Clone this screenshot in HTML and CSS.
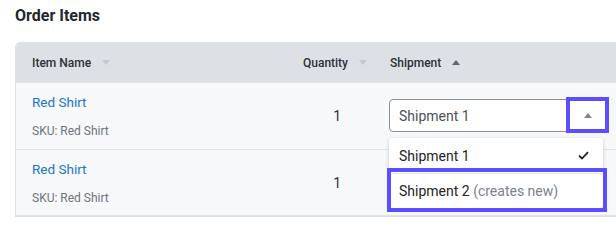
FILE: index.html
```html
<!DOCTYPE html>
<html>
<head>
<meta charset="utf-8">
<link rel="stylesheet" href="styles.css">
</head>
<body>
<div class="page">
  <h2 class="title">Order Items</h2>
  <div class="table">
    <div class="row head">
      <div class="cell c1"><span>Item Name</span><span class="caret down light"></span></div>
      <div class="cell c2"><span>Quantity</span><span class="caret down light"></span></div>
      <div class="cell c3"><span>Shipment</span><span class="caret up dark"></span></div>
    </div>
    <div class="row body-row">
      <div class="cell c1 item">
        <a class="link">Red Shirt</a>
        <span class="sku">SKU: Red Shirt</span>
      </div>
      <div class="cell c2 qty">1</div>
      <div class="cell c3 ship">
        <div class="select">
          <span class="select-value">Shipment 1</span>
          <div class="select-btn"><span class="caret up mid"></span></div>
        </div>
        <div class="menu">
          <div class="option">
            <span>Shipment 1</span>
            <svg class="check" width="11" height="9" viewBox="0 0 11 9"><path d="M1 4.6 L4 7.5 L10 1.2" fill="none" stroke="#1c2026" stroke-width="1.8"/></svg>
          </div>
          <div class="option second">
            <span>Shipment 2 <span class="muted">(creates new)</span></span>
            <div class="hl"></div>
          </div>
        </div>
      </div>
    </div>
    <div class="row body-row last">
      <div class="cell c1 item">
        <a class="link">Red Shirt</a>
        <span class="sku">SKU: Red Shirt</span>
      </div>
      <div class="cell c2 qty">1</div>
      <div class="cell c3"></div>
    </div>
  </div>
</div>
</body>
</html>
```
FILE: styles.css
```css
html, body {
  margin: 0;
  padding: 0;
  overflow: hidden;
  background: #ffffff;
}
body {
  font-family: Roboto, "Liberation Sans", sans-serif;
  color: #2b3138;
}
.page {
  padding: 6px 0 0 15px;
}
.title {
  margin: 0 0 16px 0;
  font-size: 16px;
  line-height: 20px;
  font-weight: 700;
  color: #22272d;
}
.table {
  width: 600px;
  border: 1px solid #dde1e5;
  border-right: none;
  border-top: none;
  border-radius: 5px 0 0 0;
  background: #f7f8fa;
}
.row {
  display: grid;
  grid-template-columns: 269px 104px 1fr;
}
.head {
  background: #dde1e5;
  height: 41px;
  border-radius: 5px 0 0 0;
  font-size: 12px;
  font-weight: 500;
  color: #2b3138;
}
.head .cell {
  display: flex;
  align-items: center;
}
.head .c1 { padding-left: 16px; gap: 11px; }
.head .c2 { justify-content: flex-end; padding-right: 22px; gap: 11px; }
.head .c3 { padding-left: 1px; gap: 11px; }
.caret {
  width: 0;
  height: 0;
  border-left: 4.5px solid transparent;
  border-right: 4.5px solid transparent;
}
.caret.down { border-top: 5px solid #c3c8ce; }
.caret.up { border-bottom: 5px solid #5e6670; }
.caret.up.mid { border-bottom-color: #7e8791; }
.body-row {
  height: 66px;
  border-bottom: 1px solid #dfe3e7;
}
.body-row.last { height: 65px; }
.item {
  padding: 10px 0 0 16px;
  display: flex;
  flex-direction: column;
  gap: 12px;
}
.link {
  font-size: 13.5px;
  line-height: 18px;
  color: #1b76c6;
}
.sku {
  font-size: 12px;
  line-height: 16px;
  color: #6d747c;
}
.qty {
  display: flex;
  align-items: center;
  justify-content: flex-end;
  padding-right: 48px;
  font-size: 14px;
  color: #2b3138;
}
.ship {
  position: relative;
  padding-top: 16px;
}
.select {
  position: relative;
  width: 212px;
  height: 31px;
  border: 1px solid #8b929a;
  border-radius: 4px;
  background: #ffffff;
  display: flex;
  align-items: center;
}
.select-value {
  padding-left: 9px;
  font-size: 14px;
  color: #4a5159;
}
.select-btn {
  position: absolute;
  left: 176px;
  top: -3px;
  width: 35px;
  height: 28px;
  border: 4px solid #5b4eff;
  background: #ffffff;
  display: flex;
  align-items: center;
  justify-content: center;
}
.menu {
  position: absolute;
  left: 0;
  top: 55px;
  width: 214px;
  background: #ffffff;
  border-radius: 4px;
  box-shadow: 0 1px 4px rgba(30, 40, 50, 0.18);
  z-index: 2;
}
.option {
  position: relative;
  height: 35px;
  display: flex;
  align-items: center;
  justify-content: space-between;
  padding: 0 10px;
  font-size: 14px;
  color: #1e2328;
}
.option.second {
  border-top: 1px solid #e4e7ea;
  height: 34px;
}
.check { margin-right: 4px; }
.muted { color: #7a828b; }
.hl {
  position: absolute;
  left: -2px;
  right: -4px;
  top: -6px;
  bottom: -4px;
  border: 4px solid #5b4eff;
}
```
